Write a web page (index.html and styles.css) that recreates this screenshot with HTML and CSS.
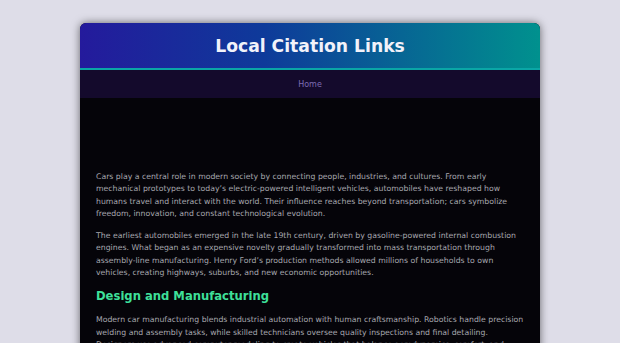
FILE: index.html
```html
<!DOCTYPE html>
<html lang="en">
<head>
<meta charset="utf-8">
<title>Local Citation Links</title>
<link rel="stylesheet" href="styles.css">
</head>
<body>
<div class="page">
  <header class="header">
    <h1 class="title">Local Citation Links</h1>
  </header>
  <nav class="nav"><a class="nav-link" href="#">Home</a></nav>
  <main class="main">
    <p class="para">Cars play a central role in modern society by connecting people, industries, and cultures. From early mechanical prototypes to today’s electric-powered intelligent vehicles, automobiles have reshaped how humans travel and interact with the world. Their influence reaches beyond transportation; cars symbolize freedom, innovation, and constant technological evolution.</p>
    <p class="para">The earliest automobiles emerged in the late 19th century, driven by gasoline-powered internal combustion engines. What began as an expensive novelty gradually transformed into mass transportation through assembly-line manufacturing. Henry Ford’s production methods allowed millions of households to own vehicles, creating highways, suburbs, and new economic opportunities.</p>
    <h2 class="section-title">Design and Manufacturing</h2>
    <p class="para">Modern car manufacturing blends industrial automation with human craftsmanship. Robotics handle precision welding and assembly tasks, while skilled technicians oversee quality inspections and final detailing. Designers use advanced computer modeling to create vehicles that balance aerodynamics, comfort, and safety.</p>
  </main>
</div>
</body>
</html>
```
FILE: styles.css
```css
html, body { margin: 0; padding: 0; }
body {
  background: #dedde8;
  font-family: "DejaVu Sans", sans-serif;
  padding: 23px 80px 0;
  height: 343px;
  overflow: hidden;
  box-sizing: border-box;
}
.page {
  border-radius: 6px 6px 0 0;
  overflow: hidden;
  background: #050409;
  box-shadow: 0 0 8px rgba(0,0,0,0.55);
  min-height: 400px;
}
.header {
  background: linear-gradient(90deg, #241a9c 0%, #0e3a9a 40%, #00918e 100%);
  border-bottom: 2px solid #0aa6a6;
  height: 45px;
  display: flex;
  align-items: center;
  justify-content: center;
}
.title {
  margin: 0;
  color: #f2f2fa;
  font-size: 17.2px;
  font-weight: bold;
}
.nav {
  background: #140a2c;
  height: 28px;
  display: flex;
  align-items: center;
  justify-content: center;
}
.nav-link {
  color: #7d6cb2;
  font-size: 8px;
  text-decoration: none;
}
.main {
  padding: 73px 16px 0;
  color: #a6a6ae;
  font-size: 7.75px;
  line-height: 12.3px;
}
.para { margin: 0 0 10px; }
.section-title {
  margin: 9px 0 11px;
  color: #3ee09a;
  font-size: 11.6px;
  line-height: 14px;
}
```
